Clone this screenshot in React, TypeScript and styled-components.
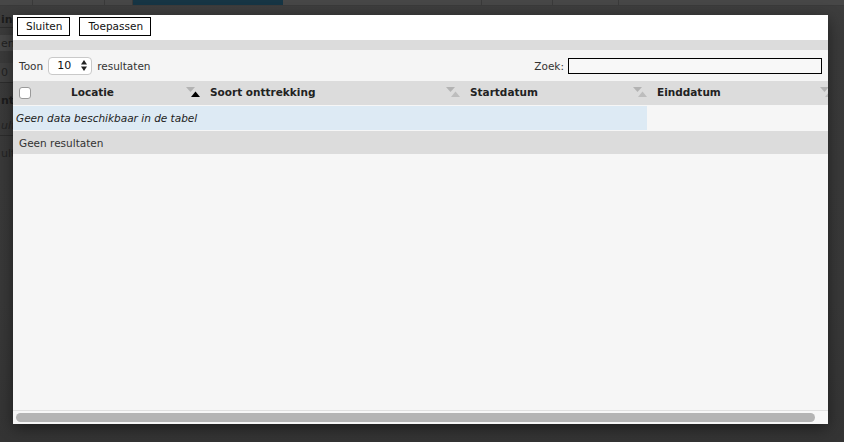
import React from "react";
import styled, { createGlobalStyle } from "styled-components";

const GlobalStyle = createGlobalStyle`
  html, body { margin: 0; padding: 0; }
  body { background: #333; font-family: "DejaVu Sans", Verdana, sans-serif; }
  * { box-sizing: border-box; }
`;

const Page = styled.div`
  position: relative;
  width: 844px;
  height: 442px;
  overflow: hidden;
  background: linear-gradient(#3e3e3e 0px, #3a3a3a 40px, #383838 300px, #343434 442px);
`;

const TopTabs = styled.div`
  display: flex;
  height: 6px;
  background: #474747;
  border-bottom: 1px solid #3a3a3a;
`;

const Tab = styled.div<{ $w: number; $active?: boolean }>`
  width: ${(p) => p.$w}px;
  height: 100%;
  border-right: 1px solid ${(p) => (p.$active ? "transparent" : "#3a3a3a")};
  background: ${(p) => (p.$active ? "#163544" : "transparent")};
`;

const SideColumn = styled.div`
  display: flex;
  flex-direction: column;
  width: 13px;
  margin-top: 6px;
  overflow: hidden;
`;

const SideLine = styled.div<{ $h: number; $bg?: string; $bold?: boolean; $italic?: boolean; $color?: string; $line?: boolean }>`
  display: flex;
  align-items: center;
  height: ${(p) => p.$h}px;
  padding-left: 1px;
  background: ${(p) => p.$bg || "transparent"};
  border-bottom: ${(p) => (p.$line ? "1px solid #2c2c2c" : "none")};
  font-size: 11px;
  white-space: nowrap;
  font-weight: ${(p) => (p.$bold ? 700 : 400)};
  font-style: ${(p) => (p.$italic ? "italic" : "normal")};
  color: ${(p) => p.$color || "#1c1c1c"};
`;

const Modal = styled.div`
  position: absolute;
  left: 13px;
  top: 15px;
  width: 815px;
  height: 409px;
  display: flex;
  flex-direction: column;
  background: #f6f6f6;
  box-shadow: 0 4px 14px rgba(0, 0, 0, 0.45);
  font-size: 10.5px;
  color: #222;
`;

const Toolbar = styled.div`
  display: flex;
  align-items: flex-start;
  gap: 9px;
  height: 25px;
  padding: 2px 4px 0;
  background: #ffffff;
`;

const Button = styled.button`
  height: 19px;
  padding: 0 7px 0 8px;
  border: 1px solid #000;
  background: #fff;
  font-family: "DejaVu Sans", Verdana, sans-serif;
  font-size: 10.5px;
  color: #111;
  line-height: 17px;
`;

const Divider = styled.div`
  height: 10px;
  background: #dcdcdc;
`;

const Controls = styled.div`
  display: flex;
  align-items: center;
  justify-content: space-between;
  height: 31px;
  padding: 0 6px 0 6px;
  background: #f5f5f5;
`;

const Control = styled.label`
  display: flex;
  align-items: center;
  gap: 5px;
  color: #333;
  white-space: nowrap;
`;

const SearchControl = styled(Control)`
  gap: 4px;
`;

const SelectBox = styled.div`
  display: flex;
  align-items: center;
  justify-content: space-between;
  width: 44px;
  height: 18px;
  padding: 0 4px 0 8px;
  border: 1px solid #c9c9c9;
  border-radius: 4px;
  background: #fff;
  color: #111;
  font-size: 11px;
`;

const SearchInput = styled.div`
  width: 254px;
  height: 16px;
  border: 1px solid #000;
  background: #f8f8f8;
`;

const TableArea = styled.div`
  flex: 1;
  display: flex;
  flex-direction: column;
  gap: 1px;
  overflow: hidden;
`;

const HeaderRow = styled.div`
  display: grid;
  grid-template-columns: 55px 139px 260px 187px 187px;
  height: 24px;
  background: #dcdcdc;
  overflow: hidden;
`;

const HeadCell = styled.div`
  display: flex;
  align-items: center;
  justify-content: space-between;
  padding: 0 7px 3px 3px;
  font-weight: 700;
  color: #222;
  white-space: nowrap;
`;

const CheckCell = styled.div`
  display: flex;
  align-items: center;
  padding-left: 6px;
  padding-bottom: 1px;
`;

const CheckBox = styled.div`
  width: 12px;
  height: 12px;
  border: 1px solid #9a9a9a;
  border-radius: 3px;
  background: #fff;
`;

const EmptyRow = styled.div`
  display: flex;
  align-items: center;
  width: 634px;
  height: 24px;
  padding-left: 3px;
  background: #ddeaf4;
  font-style: italic;
  color: #222;
`;

const InfoRow = styled.div`
  display: flex;
  align-items: center;
  height: 23px;
  padding-left: 6px;
  background: #dcdcdc;
  color: #333;
`;

const ScrollArea = styled.div`
  height: 14px;
  border-top: 1px solid #e0e0e0;
  padding: 2px 13px 0 3px;
  background: #f7f7f7;
`;

const Thumb = styled.div`
  height: 9px;
  border-radius: 5px;
  background: #b4b4b4;
`;

const SortIcon = ({ active }: { active?: boolean }) => (
  <svg width="14" height="10" viewBox="0 0 14 10">
    <polygon points="0,0 9,0 4.5,5" fill="#b3b3b3" />
    <polygon points="5,10 14,10 9.5,4.5" fill={active ? "#000" : "#bdbdbd"} />
  </svg>
);

const SelectArrows = () => (
  <svg width="6" height="11" viewBox="0 0 6 11">
    <polygon points="0,4.5 6,4.5 3,0" fill="#222" />
    <polygon points="0,6.5 6,6.5 3,11" fill="#222" />
  </svg>
);

export default function App() {
  return (
    <>
      <GlobalStyle />
      <Page>
        <TopTabs>
          <Tab $w={33} />
          <Tab $w={72} />
          <Tab $w={28} />
          <Tab $w={150} $active />
          <Tab $w={199} />
          <Tab $w={71} />
          <Tab $w={66} />
        </TopTabs>
        <SideColumn>
          <SideLine $h={16} $bold $line>ing</SideLine>
          <SideLine $h={7} />
          <SideLine $h={16} $bg="#474747" $color="#222">en</SideLine>
          <SideLine $h={12} />
          <SideLine $h={20} $bg="#404040" $color="#222" $line>0</SideLine>
          <SideLine $h={7} />
          <SideLine $h={20} $bold>nt</SideLine>
          <SideLine $h={6} />
          <SideLine $h={20} $italic $color="#242424" $line>ulta</SideLine>
          <SideLine $h={7} />
          <SideLine $h={20} $color="#242424">ult</SideLine>
        </SideColumn>
        <Modal>
          <Toolbar>
            <Button>Sluiten</Button>
            <Button>Toepassen</Button>
          </Toolbar>
          <Divider />
          <Controls>
            <Control>
              Toon
              <SelectBox>
                10
                <SelectArrows />
              </SelectBox>
              resultaten
            </Control>
            <SearchControl>
              Zoek:
              <SearchInput />
            </SearchControl>
          </Controls>
          <TableArea>
            <HeaderRow>
              <CheckCell>
                <CheckBox />
              </CheckCell>
              <HeadCell>
                Locatie
                <SortIcon active />
              </HeadCell>
              <HeadCell>
                Soort onttrekking
                <SortIcon />
              </HeadCell>
              <HeadCell>
                Startdatum
                <SortIcon />
              </HeadCell>
              <HeadCell>
                Einddatum
                <SortIcon />
              </HeadCell>
            </HeaderRow>
            <EmptyRow>Geen data beschikbaar in de tabel</EmptyRow>
            <InfoRow>Geen resultaten</InfoRow>
          </TableArea>
          <ScrollArea>
            <Thumb />
          </ScrollArea>
        </Modal>
      </Page>
    </>
  );
}
